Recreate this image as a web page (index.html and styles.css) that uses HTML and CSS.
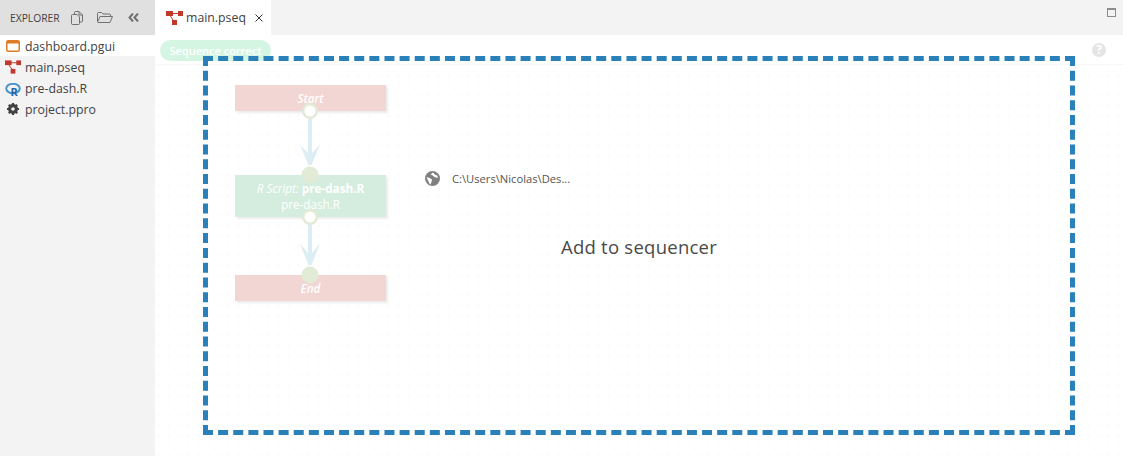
FILE: index.html
```html
<!DOCTYPE html>
<html lang="en">
<head>
  <meta charset="UTF-8">
  <title>main.pseq</title>
  <link rel="stylesheet" href="styles.css">
</head>
<body>
  <div class="app">
    <!-- Sidebar -->
    <aside class="sidebar">
      <div class="sidebar-head">
        <span class="sidebar-title">EXPLORER</span>
        <svg class="head-icon" width="12" height="14" viewBox="0 0 12 14"><path d="M3.5 3V1.500a1 1 0 0 1 1-1h3.500l3.500 3.500v6a1 1 0 0 1-1 1H9M8 .5V4h3.500M1.500 3.500h4.500l2.500 2.500v6.500a1 1 0 0 1-1 1h-6a1 1 0 0 1-1-1v-8a1 1 0 0 1 1-1z" fill="none" stroke="#707070"/></svg>
        <svg class="head-icon head-icon-folder" width="16" height="11" viewBox="0 0 16 11"><path d="M.5 10V1.500a1 1 0 0 1 1-1h3l1.500 1.500h6.500a1 1 0 0 1 1 1V4.500M.5 10l2.500-5.500h12.500l-2.500 6H1z" fill="none" stroke="#707070"/></svg>
        <svg class="head-icon" width="11" height="9" viewBox="0 0 11 9"><path d="M5 .5L1.500 4.500 5 8.500M10 .5L6.500 4.500 10 8.500" fill="none" stroke="#707070" stroke-width="2"/></svg>
      </div>
      <ul class="file-list">
        <li class="file file-active">
          <span class="file-icon">
            <svg width="14" height="12" viewBox="0 0 14 12"><rect x=".75" y=".75" width="12.500" height="10.500" rx="1.500" fill="#fff" stroke="#e07b25" stroke-width="1.500"/><rect x="1" y="1" width="12" height="2.500" fill="#e07b25"/></svg>
          </span>
          dashboard.pgui
        </li>
        <li class="file">
          <span class="file-icon">
            <svg width="17" height="14" viewBox="0 0 17 14"><path d="M3 3L8.500 11M3 2.500H14" stroke="#c0392b" fill="none"/><rect x="0" y="0" width="7" height="5" fill="#c0392b"/><rect x="12" y="0" width="5" height="5" fill="#c0392b"/><rect x="6" y="9" width="5" height="5" fill="#c0392b"/></svg>
          </span>
          main.pseq
        </li>
        <li class="file">
          <span class="file-icon file-icon-r">
            <svg width="16" height="18" viewBox="0 0 16 18"><ellipse cx="8" cy="5.500" rx="6.800" ry="4.700" fill="none" stroke="#4a94cc" stroke-width="2"/><text x="5.500" y="13" class="r-glyph">R</text></svg>
          </span>
          pre-dash.R
        </li>
        <li class="file">
          <span class="file-icon">
            <svg width="14" height="14" viewBox="0 0 14 14"><circle cx="7" cy="7" r="3.500" fill="none" stroke="#424242" stroke-width="3"/><path d="M7 1v12M1 7h12M2.800 2.800l8.400 8.400M11.200 2.800l-8.400 8.400" stroke="#424242" stroke-width="2.200"/><circle cx="7" cy="7" r="1.800" fill="#f3f3f3"/></svg>
          </span>
          project.ppro
        </li>
      </ul>
    </aside>

    <main class="main">
      <div class="tabbar">
        <div class="tab">
          <svg width="17" height="14" viewBox="0 0 17 14"><path d="M3 3L8.500 11M3 2.500H14" stroke="#c0392b" fill="none"/><rect x="0" y="0" width="7" height="5" fill="#c0392b"/><rect x="12" y="0" width="5" height="5" fill="#c0392b"/><rect x="6" y="9" width="5" height="5" fill="#c0392b"/></svg>
          <span class="tab-name">main.pseq</span>
          <svg class="tab-close" width="8" height="8" viewBox="0 0 8 8"><path d="M.5.500l7 7M7.500.500l-7 7" stroke="#333"/></svg>
        </div>
        <div class="tabbar-actions">
          <span class="maximize"></span>
        </div>
      </div>

      <div class="canvas">
        <div class="canvas-bar">
          <div class="status-pill">Sequence correct</div>
          <div class="help">?</div>
        </div>
        <div class="grid"></div>

        <!-- Sequence diagram -->
        <div class="node node-red node-start">Start</div>
        <div class="node node-green node-script">
          <div><i>R Script:</i> <b>pre-dash.R</b></div>
          <div>pre-dash.R</div>
        </div>
        <div class="node node-red node-end">End</div>

        <svg class="edges" width="60" height="185" viewBox="0 0 60 185">
          <g fill="#dcedf3">
            <path d="M20 42L28 50V15H32V50L40 42L31.500 62H28.500Z"/>
            <path d="M20 141L28 150V120H32V150L40 141L31.500 162H28.500Z"/>
          </g>
          <g fill="#fff" stroke="#e2ebd5" stroke-width="2.500">
            <circle cx="30" cy="8" r="6.800"/>
            <circle cx="30" cy="114" r="6.800"/>
          </g>
          <g fill="#e2ebd5">
            <circle cx="30" cy="72" r="8.500"/>
            <circle cx="30" cy="172" r="8.500"/>
          </g>
        </svg>

        <div class="path-info">
          <svg width="15" height="15" viewBox="0 0 15 15"><circle cx="7.500" cy="7.500" r="7.500" fill="#808080"/><path d="M8 1.500c1.500 1 1 2 3 2.500s2 1.500 1.500 3l-3-1-2.500-2-1.500-.5zM1.500 6l3 1 2.500 1.500-.5 2.500-1 2.500c-1-.5-1.500-2-2-3z" fill="#fff"/></svg>
          <span>C:\Users\Nicolas\Des...</span>
        </div>

        <!-- Drop zone on top of the diagram -->
        <div class="dropzone">
          <span class="dropzone-label">Add to sequencer</span>
        </div>
      </div>
    </main>
  </div>
</body>
</html>
```

FILE: styles.css
```css
:root {
  --side-bg: #f3f3f3;
  --head-bg: #e0e0e0;
  --text: #424242;
  --blue: #2a80b9;
}

* {
  box-sizing: border-box;
}

html, body {
  height: 100%;
}

body {
  margin: 0;
  font-family: "Open Sans", "Noto Sans", Arial, sans-serif;
  font-size: 12.3px;
  color: var(--text);
  background-color: #fff;
  overflow: hidden;
}

.app {
  display: flex;
  height: 100%;
}

.sidebar {
  width: 155px;
  flex: none;
  background-color: var(--side-bg);
}

.sidebar-head {
  height: 35px;
  display: flex;
  align-items: center;
  padding-left: 10px;
  background-color: var(--head-bg);
}

.sidebar-title {
  font-size: 10.3px;
  width: 61px;
}

.head-icon {
  margin-right: 14px;
}

.head-icon-folder {
  margin-right: 15px;
}

.file-list {
  list-style: none;
  margin: 0;
  padding: 0;
}

.file {
  height: 21px;
  display: flex;
  align-items: center;
  gap: 4px;
  padding: 1px 0 0 5px;
  white-space: nowrap;
}

.file-active {
  background-color: #fff;
}

.file-icon {
  width: 16px;
  display: flex;
  justify-content: center;
}

.file-icon-r {
  height: 18px;
  margin-top: 7px;
}

.r-glyph {
  font-size: 11px;
  font-weight: 700;
  fill: #1f65b0;
}

.main {
  flex: 1;
  display: flex;
  flex-direction: column;
  min-width: 0;
}

.tabbar {
  height: 35px;
  flex: none;
  display: flex;
  justify-content: space-between;
  background-color: var(--side-bg);
}

.tab {
  width: 116px;
  display: flex;
  align-items: center;
  padding-left: 11px;
  background-color: #fff;
}

.tab-name {
  margin-left: 3px;
}

.tab-close {
  margin-left: 9px;
}

.tabbar-actions {
  padding: 8px 7px 0 0;
}

.maximize {
  display: block;
  width: 9px;
  height: 9px;
  border: 1px solid #8c8c8c;
  border-top-width: 2px;
}

.canvas {
  position: relative;
  flex: 1;
  display: flex;
  flex-direction: column;
}

.canvas-bar {
  height: 29px;
  flex: none;
  display: flex;
  justify-content: space-between;
  align-items: flex-start;
  padding: 5px 17px 0 5px;
}

.grid {
  flex: 1;
  border-top: 1px solid #f8f8f8;
  background-image: radial-gradient(circle, #f9f9f9 .8px, transparent .9px);
  background-size: 10px 10px;
  background-position: 8.500px 5.500px;
}

.status-pill {
  width: 111px;
  height: 21px;
  border-radius: 11px;
  background-color: #d5f5e3;
  color: #fff;
  font-size: 11px;
  line-height: 21px;
  text-align: center;
  font-weight: 600;
}

.help {
  width: 14px;
  height: 14px;
  margin-top: 3px;
  border-radius: 50%;
  background-color: #e5e5e5;
  color: #fff;
  font-size: 12px;
  font-weight: 700;
  line-height: 14px;
  text-align: center;
}

.node {
  position: absolute;
  left: 80px;
  width: 151px;
  color: #fff;
  text-align: center;
  box-shadow: 2px 2px 2px #ececec;
}

.node-red {
  height: 26px;
  line-height: 27px;
  background-color: #f2d6d4;
  font-style: italic;
  font-size: 11.7px;
  font-weight: 600;
}

.node-green {
  height: 42px;
  padding-top: 5px;
  background-color: #d4eddf;
  font-size: 11.7px;
  line-height: 16px;
}

.node-start {
  top: 50px;
}

.node-script {
  top: 140px;
}

.node-end {
  top: 240px;
}

.edges {
  position: absolute;
  left: 125px;
  top: 68px;
}

.path-info {
  position: absolute;
  left: 270px;
  top: 136px;
  display: flex;
  align-items: center;
  gap: 12px;
  font-size: 11.2px;
  color: #555;
}

.dropzone {
  position: absolute;
  left: 48px;
  top: 21px;
  width: 872px;
  height: 379px;
  border: 5px dashed var(--blue);
  display: flex;
  align-items: center;
  justify-content: center;
}

.dropzone-label {
  font-size: 18.500px;
  letter-spacing: .25px;
  color: #4a4a4a;
  margin-top: 2px;
}
```
